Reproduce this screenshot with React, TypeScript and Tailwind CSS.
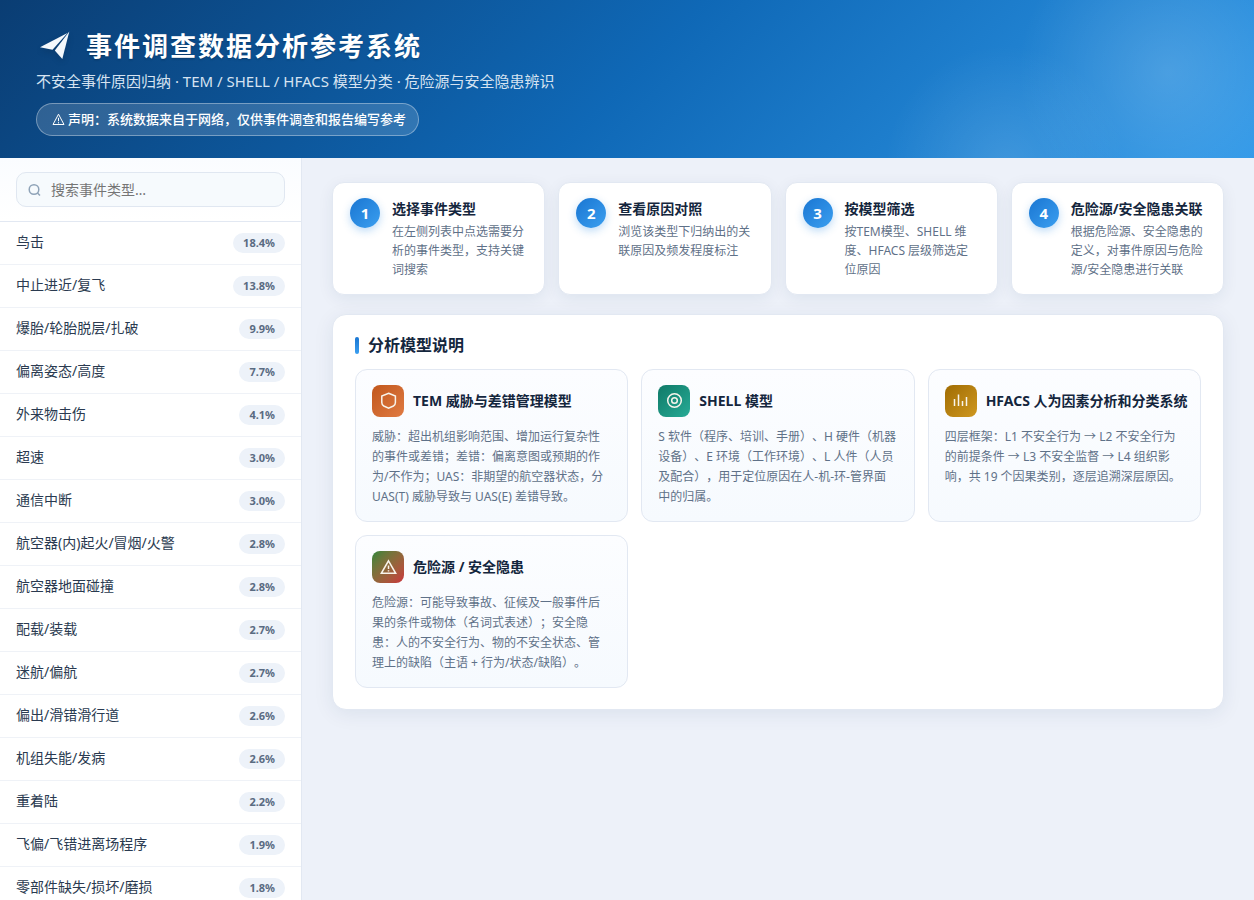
import React from "react";

const events = [
  { name: "鸟击", rate: "18.4%" },
  { name: "中止进近/复飞", rate: "13.8%" },
  { name: "爆胎/轮胎脱层/扎破", rate: "9.9%" },
  { name: "偏离姿态/高度", rate: "7.7%" },
  { name: "外来物击伤", rate: "4.1%" },
  { name: "超速", rate: "3.0%" },
  { name: "通信中断", rate: "3.0%" },
  { name: "航空器(内)起火/冒烟/火警", rate: "2.8%" },
  { name: "航空器地面碰撞", rate: "2.8%" },
  { name: "配载/装载", rate: "2.7%" },
  { name: "迷航/偏航", rate: "2.7%" },
  { name: "偏出/滑错滑行道", rate: "2.6%" },
  { name: "机组失能/发病", rate: "2.6%" },
  { name: "重着陆", rate: "2.2%" },
  { name: "飞偏/飞错进离场程序", rate: "1.9%" },
  { name: "零部件缺失/损坏/磨损", rate: "1.8%" },
];

const steps = [
  { title: "选择事件类型", text: "在左侧列表中点选需要分析的事件类型，支持关键词搜索" },
  { title: "查看原因对照", text: "浏览该类型下归纳出的关联原因及频发程度标注" },
  { title: "按模型筛选", text: "按TEM模型、SHELL 维度、HFACS 层级筛选定位原因" },
  { title: "危险源/安全隐患关联", text: "根据危险源、安全隐患的定义，对事件原因与危险源/安全隐患进行关联" },
];

const models = [
  {
    title: "TEM 威胁与差错管理模型",
    text: "威胁：超出机组影响范围、增加运行复杂性的事件或差错；差错：偏离意图或预期的作为/不作为；UAS：非期望的航空器状态，分 UAS(T) 威胁导致与 UAS(E) 差错导致。",
    color: "bg-linear-135 from-[#c1571b] to-[#e07b42]",
    icon: <path d="M16.600 8.300 23.400 11v6.500q0 2.400-2 3.500l-4.800 2.200-4.800-2.200q-2-1.100-2-3.500V11z" />,
  },
  {
    title: "SHELL 模型",
    text: "S 软件（程序、培训、手册）、H 硬件（机器设备）、E 环境（工作环境）、L 人件（人员及配合），用于定位原因在人-机-环-管界面中的归属。",
    color: "bg-linear-135 from-[#0f7a68] to-[#27ab96]",
    icon: (
      <>
        <circle cx="16.500" cy="15.500" r="6.800" />
        <circle cx="16.500" cy="15.500" r="2.800" />
      </>
    ),
  },
  {
    title: "HFACS 人为因素分析和分类系统",
    text: "四层框架：L1 不安全行为 → L2 不安全行为的前提条件 → L3 不安全监督 → L4 组织影响，共 19 个因果类别，逐层追溯深层原因。",
    color: "bg-linear-135 from-[#a06c02] to-[#cf981f]",
    icon: <path d="M9.500 14v7M13.500 9.500V21M17.500 16v5M21.500 12v9" />,
  },
  {
    title: "危险源 / 安全隐患",
    text: "危险源：可能导致事故、征候及一般事件后果的条件或物体（名词式表述）；安全隐患：人的不安全行为、物的不安全状态、管理上的缺陷（主语 + 行为/状态/缺陷）。",
    color: "bg-linear-135 from-[#1f8439] to-[#c9303d]",
    icon: <path d="M16.500 9.800 23.700 22.300H9.300zM16.500 14.500v3.500M16.500 19.200v1.300" />,
  },
];

function Header() {
  return (
    <header className="bg-[radial-gradient(circle_at_1168px_72px,rgba(255,255,255,0.16),transparent_150px),radial-gradient(circle_at_1005px_165px,rgba(255,255,255,0.12),transparent_120px),linear-gradient(135deg,#0a3d73_0%,#0f68b6_50%,#2f98e8_100%)] px-9 pt-7 pb-[22px] text-white">
      <div className="flex h-9 items-center gap-[10px]">
        <svg viewBox="0 0 40 36" className="h-9 w-10 drop-shadow-md" fill="#f4f8fc" aria-hidden="true">
          <path d="M4 19.300 31.500 5 16.500 21.800z" />
          <path d="M33.300 3.500 26.300 31 18.800 22.500z" />
        </svg>
        <h1 className="text-[26px] leading-9 font-bold tracking-[2px] text-shadow-sm">事件调查数据分析参考系统</h1>
      </div>
      <p className="mt-[6px] text-[15px] leading-[22px] text-[#d6e3f1]">
        不安全事件原因归纳 · TEM / SHELL / HFACS 模型分类 · 危险源与安全隐患辨识
      </p>
      <p className="mt-[11px] flex h-[33px] w-fit items-center gap-[3px] rounded-full border border-white/35 bg-white/15 pr-3 pl-[15px] text-[13px] font-medium">
        <svg viewBox="0 0 13 13" className="h-[13px] w-[13px]" fill="none" stroke="currentColor" strokeLinejoin="round" aria-hidden="true">
          <path d="M6.500 1.200 12 11.500H1zM6.500 4.800v3.400M6.500 9.200v1.200" />
        </svg>
        声明：系统数据来自于网络，仅供事件调查和报告编写参考
      </p>
    </header>
  );
}

function Sidebar() {
  return (
    <aside className="w-[302px] shrink-0 border-r border-[#e2e8f2] bg-white">
      <div className="border-b border-[#e2e8f2] bg-linear-to-b from-[#fafcff] to-white px-4 py-[14px]">
        <label className="flex h-[35px] items-center gap-[9px] rounded-[10px] border border-[#e0e7f1] bg-[#f6fafd] px-[11px]">
          <svg viewBox="0 0 14 14" className="h-[14px] w-[14px] shrink-0" fill="none" stroke="#8fa3b8" strokeWidth="1.500" aria-hidden="true">
            <circle cx="6" cy="6.500" r="4.800" />
            <path d="m9.500 10 2.500 2.500" />
          </svg>
          <input
            type="text"
            aria-label="搜索事件类型"
            placeholder="搜索事件类型…"
            className="w-full min-w-0 bg-transparent text-sm outline-none placeholder:text-[#757575]"
          />
        </label>
      </div>
      <ul>
        {events.map((event) => (
          <li key={event.name}>
            <button className="flex h-[43px] w-full items-center justify-between border-b border-[#eff2f7] px-4 text-left">
              <span className="pb-[2px] text-sm leading-5 text-[#2a3a50]">{event.name}</span>
              <span className="rounded-full bg-[#edf2f9] px-[10px] text-[11px] leading-5 font-bold text-[#5a6b82]">{event.rate}</span>
            </button>
          </li>
        ))}
      </ul>
    </aside>
  );
}

function Steps() {
  return (
    <ol className="grid grid-cols-4 gap-[13px]">
      {steps.map((step, i) => (
        <li key={step.title} className="flex gap-3 rounded-xl border border-[#e2e8f2] bg-white px-[17px] py-[15px] shadow-[0_4px_16px_rgba(15,50,90,0.07)]">
          <span className="flex size-[30px] shrink-0 items-center justify-center rounded-full bg-linear-135 from-[#1976d2] to-[#3b9ff0] text-[15px] font-bold text-white shadow-[0_3px_8px_rgba(33,133,224,0.3)]">
            {i + 1}
          </span>
          <div className="min-w-0">
            <h3 className="text-sm leading-[21px] font-bold whitespace-nowrap text-[#14263d]">{step.title}</h3>
            <p className="mt-[3px] text-xs leading-[19px] text-[#5f7188]">{step.text}</p>
          </div>
        </li>
      ))}
    </ol>
  );
}

function Models() {
  return (
    <section className="mt-[19px] rounded-[14px] border border-[#e2e8f2] bg-white px-[22px] pt-[18px] pb-[21px] shadow-[0_4px_20px_rgba(15,50,90,0.08)]">
      <h2 className="flex items-center gap-[9px] text-base leading-6 font-bold text-[#14263d]">
        <span className="h-[17px] w-1 rounded-xs bg-linear-to-b from-[#1976d2] to-[#3b9ff0]" />
        分析模型说明
      </h2>
      <div className="mt-3 grid grid-cols-3 gap-[13px]">
        {models.map((model) => (
          <article key={model.title} className="rounded-xl border border-[#e2e8f2] bg-linear-to-b from-[#fcfdff] to-[#f6fafe] px-4 pt-[15px] pb-[14px]">
            <div className="flex items-center gap-[9px]">
              <span className={`size-8 shrink-0 rounded-lg ${model.color}`}>
                <svg viewBox="0 0 32 32" className="size-8" fill="none" stroke="#f8f4ec" strokeWidth="1.500" aria-hidden="true">
                  {model.icon}
                </svg>
              </span>
              <h3 className="text-sm leading-5 font-bold whitespace-nowrap text-[#14263d]">{model.title}</h3>
            </div>
            <p className="mt-[10px] text-xs leading-5 text-[#5f7188]">{model.text}</p>
          </article>
        ))}
      </div>
    </section>
  );
}

export default function App() {
  return (
    <div lang="zh-CN" className="flex h-screen flex-col overflow-hidden bg-[#edf1f9] font-['Noto_Sans','Noto_Sans_CJK_SC',sans-serif] [text-spacing-trim:space-all]">
      <Header />
      <div className="flex min-h-0 flex-1">
        <Sidebar />
        <main className="min-w-0 flex-1 px-[30px] py-6">
          <Steps />
          <Models />
        </main>
      </div>
    </div>
  );
}
